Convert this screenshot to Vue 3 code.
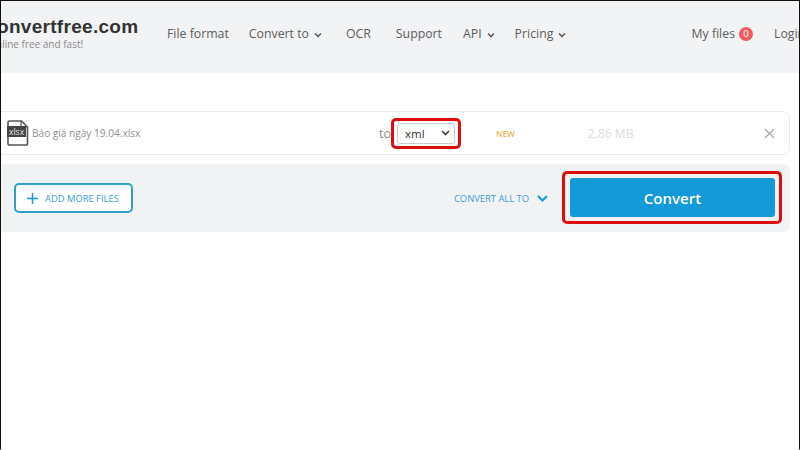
<template>
  <div class="page">
    <header class="head">
      <div class="logo">
        <div class="brand">onvertfree.com</div>
        <div class="tag">nline free and fast!</div>
      </div>
      <nav class="nav">
        <span v-for="n in nav" :key="n.t" class="nav-item" :style="{ marginLeft: n.gap + 'px' }">
          {{ n.t }}
          <svg v-if="n.c" class="caret" width="8" height="6" viewBox="0 0 8 6"><path d="M1 1.5 4 4.5 7 1.5" fill="none" stroke="#555" stroke-width="1.5"/></svg>
        </span>
      </nav>
      <div class="right">
        <span class="nav-item">My files</span>
        <span class="badge">0</span>
        <span class="nav-item login">Login</span>
      </div>
    </header>

    <main class="main">
      <section class="card">
        <svg class="file" width="22" height="26" viewBox="0 0 22 26">
          <path d="M2.5 1h12l6 6v16.500a1.500 1.500 0 0 1-1.500 1.500H2.500A1.500 1.500 0 0 1 1 23.500V2.500A1.500 1.500 0 0 1 2.500 1Z" fill="#fff" stroke="#555" stroke-width="1.600"/>
          <path d="M14 1v6h6.500" fill="none" stroke="#555" stroke-width="1.200"/>
        </svg>
        <span class="ext">xlsx</span>
        <span class="name">Báo giá ngày 19.04.xlsx</span>
        <span class="to">to</span>
        <div class="mark select-mark">
          <div class="select">
            <span>xml</span>
            <svg width="9" height="6" viewBox="0 0 9 6"><path d="M1 1 4.500 4.500 8 1" fill="none" stroke="#444" stroke-width="1.700"/></svg>
          </div>
        </div>
        <span class="new">NEW</span>
        <span class="size">2.86 MB</span>
        <svg class="close" width="11" height="11" viewBox="0 0 11 11"><path d="M1 1 10 10M10 1 1 10" stroke="#a9a9a9" stroke-width="1.300" fill="none"/></svg>
      </section>

      <section class="panel">
        <button class="add">
          <svg width="11" height="11" viewBox="0 0 11 11"><path d="M5.500 0v11M0 5.500h11" stroke="#1b97cf" stroke-width="1.500"/></svg>
          <span>ADD MORE FILES</span>
        </button>
        <div class="all">
          <span>CONVERT ALL TO</span>
          <svg width="11" height="7" viewBox="0 0 11 7"><path d="M1 1 5.500 5.500 10 1" fill="none" stroke="#1b97cf" stroke-width="2"/></svg>
        </div>
        <div class="mark convert-mark">
          <button class="convert">Convert</button>
        </div>
      </section>
    </main>
  </div>
</template>

<script setup>
const nav = [
  { t: 'File format', gap: 0 },
  { t: 'Convert to', c: true, gap: 20 },
  { t: 'OCR', gap: 24 },
  { t: 'Support', gap: 25 },
  { t: 'API', c: true, gap: 21 },
  { t: 'Pricing', c: true, gap: 20 }
]
</script>

<style>
html, body { margin: 0; background: #fff; }
</style>

<style scoped>
.page {
  box-sizing: border-box;
  width: 800px;
  height: 450px;
  overflow: hidden;
  border: 1px solid #111;
  border-bottom-color: #fff;
  background: #fff;
  font-family: "Open Sans", "Noto Sans", sans-serif;
  color: #555;
}
.head {
  height: 72px;
  background: #f2f3f5;
  display: flex;
  align-items: flex-start;
}
.logo { width: 166px; padding-top: 14px; flex: none; }
.brand {
  font: bold 19px/24px "Liberation Sans", sans-serif;
  color: #333;
  letter-spacing: 0.3px;
  white-space: nowrap;
  margin-left: -4px;
}
.tag { font-size: 10px; line-height: 13px; color: #8a8a8a; margin: -1px 0 0 -5px; white-space: nowrap; }
.nav { display: flex; padding-top: 24px; flex: none; }
.nav-item { font-size: 12.300px; line-height: 18px; white-space: nowrap; display: inline-flex; align-items: center; gap: 5px; color: #5c5c5c; }
.caret { margin-top: 1px; }
.right { margin-left: auto; display: flex; align-items: center; padding-top: 24px; margin-right: -11px; }
.badge {
  width: 14px; height: 14px; border-radius: 50%;
  background: #f25c5c; color: #fff;
  font-size: 9.500px; line-height: 14px; text-align: center;
  margin-left: 4px;
}
.login { margin-left: 21px; width: 36px; }
.main { padding: 38px 9px 0 0; }
.card {
  height: 44px;
  box-sizing: border-box;
  margin-left: -10px;
  border: 1px solid #ececec;
  border-radius: 7px;
  display: flex;
  align-items: center;
  position: relative;
  padding-left: 15px;
}
.file { flex: none; }
.ext {
  position: absolute;
  left: 15px; top: 14px;
  background: #444;
  color: #e8e8e8;
  font: 8.500px/11px "Open Sans", sans-serif;
  padding: 0 2px;
}
.name { font-size: 10.100px; color: #8f8f8f; margin-left: 3px; width: 347px; white-space: nowrap; }
.to { font-size: 12.500px; color: #8f8f8f; width: 15px; }
.mark { border: 3px solid #dd0d0d; border-radius: 5px; box-sizing: border-box; }
.select-mark { padding: 2px 3px; margin-left: -3px; width: 70px; height: 31px; display: flex; }
.select {
  flex: 1;
  box-sizing: border-box;
  border: 1px solid #ccc;
  border-radius: 3px;
  font-size: 11.500px;
  color: #333;
  display: flex;
  align-items: center;
  justify-content: space-between;
  padding: 0 4px 0 7px;
}
.new { font-size: 8.200px; font-weight: 600; color: #eeb25a; margin-left: 35px; width: 92px; }
.size { font-size: 12px; color: #ddd; width: 176px; white-space: nowrap; }
.close { flex: none; }
.panel {
  margin-top: 9px;
  margin-left: -10px;
  height: 68px;
  background: #f1f2f4;
  border-radius: 7px;
  display: flex;
  align-items: center;
  padding: 0 8px 0 23px;
}
.add {
  width: 119px; height: 30px;
  box-sizing: border-box;
  border: 2px solid #2f9fcf;
  border-radius: 5px;
  background: #fff;
  display: flex;
  align-items: center;
  gap: 7px;
  padding: 0 0 0 11px;
  color: #3a9fcf;
  font: 9.400px "Open Sans", sans-serif;
}
.all {
  margin-left: auto;
  display: flex;
  align-items: center;
  gap: 8px;
  color: #3a9fcf;
  font-size: 9.400px;
  margin-right: 14px;
}
.convert-mark { width: 220px; height: 53px; padding: 4px 4px 4px 5px; background: #f1f2f4; margin-top: -1px; }
.convert {
  width: 100%; height: 100%;
  border: 0;
  border-radius: 3px;
  background: #149ad9;
  color: #fff;
  font: 600 15px "Open Sans", sans-serif;
}
</style>
